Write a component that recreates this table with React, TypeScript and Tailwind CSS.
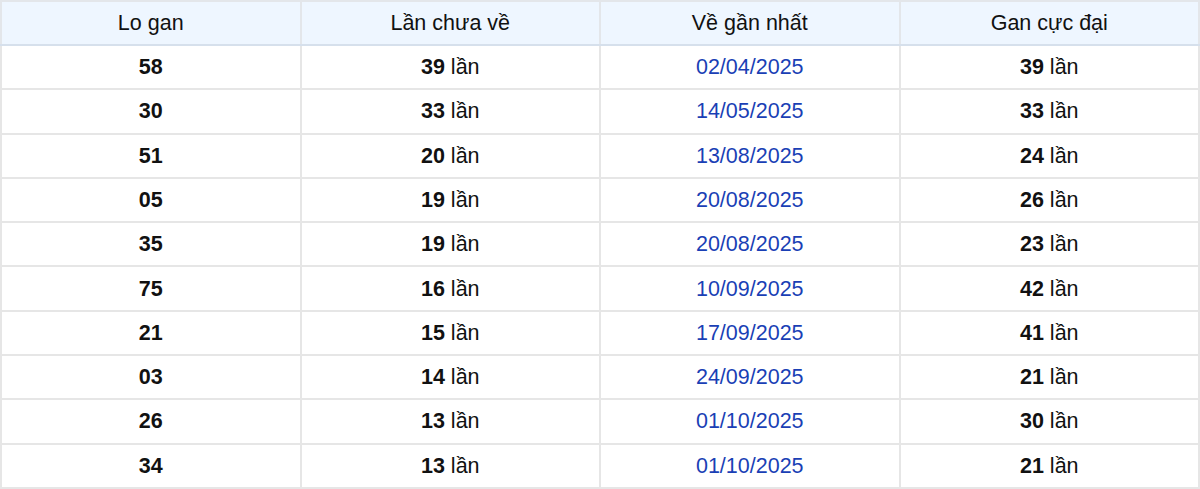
const rows: [string, number, string, number][] = [
  ['58', 39, '02/04/2025', 39],
  ['30', 33, '14/05/2025', 33],
  ['51', 20, '13/08/2025', 24],
  ['05', 19, '20/08/2025', 26],
  ['35', 19, '20/08/2025', 23],
  ['75', 16, '10/09/2025', 42],
  ['21', 15, '17/09/2025', 41],
  ['03', 14, '24/09/2025', 21],
  ['26', 13, '01/10/2025', 30],
  ['34', 13, '01/10/2025', 21],
];

const headers = ['Lo gan', 'Lần chưa về', 'Về gần nhất', 'Gan cực đại'];

export default function App() {
  return (
    <div className="w-[1200px] bg-white font-['Liberation_Sans',Arial,sans-serif] text-[21.5px] text-[#111]">
      <table className="w-full table-fixed border-collapse">
        <thead>
          <tr className="h-[44px] bg-[#eef6ff]">
            {headers.map((h) => (
              <th
                key={h}
                className="border-2 border-[#e3e6ea] border-b-[#d6e0ec] font-normal"
              >
                {h}
              </th>
            ))}
          </tr>
        </thead>
        <tbody>
          {rows.map(([lo, chua, date, max]) => (
            <tr key={lo + date} className="h-[44.3px]">
              <td className="border-2 border-[#e6e6e6] text-center font-bold">
                {lo}
              </td>
              <td className="border-2 border-[#e6e6e6] text-center">
                <b>{chua}</b> lần
              </td>
              <td className="border-2 border-[#e6e6e6] text-center text-[#1a3fb5]">
                {date}
              </td>
              <td className="border-2 border-[#e6e6e6] text-center">
                <b>{max}</b> lần
              </td>
            </tr>
          ))}
        </tbody>
      </table>
    </div>
  );
}
